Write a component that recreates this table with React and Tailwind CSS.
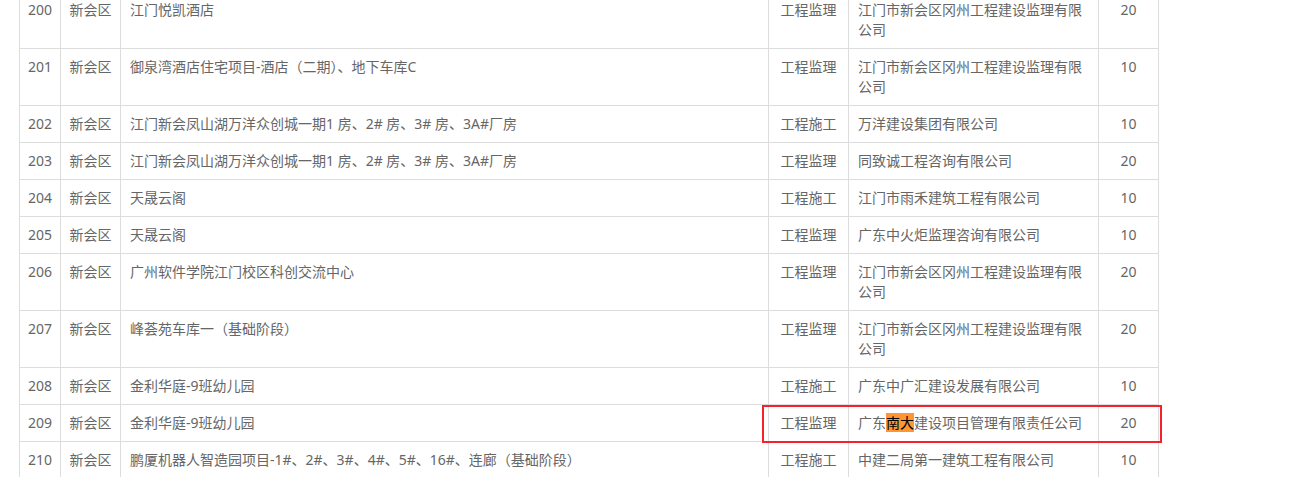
const rows = [
  ['200', '新会区', '江门悦凯酒店', '工程监理', '江门市新会区冈州工程建设监理有限公司', '20'],
  ['201', '新会区', '御泉湾酒店住宅项目-酒店（二期）、地下车库C', '工程监理', '江门市新会区冈州工程建设监理有限公司', '10'],
  ['202', '新会区', '江门新会凤山湖万洋众创城一期1 房、2# 房、3# 房、3A#厂房', '工程施工', '万洋建设集团有限公司', '10'],
  ['203', '新会区', '江门新会凤山湖万洋众创城一期1 房、2# 房、3# 房、3A#厂房', '工程监理', '同致诚工程咨询有限公司', '20'],
  ['204', '新会区', '天晟云阁', '工程施工', '江门市雨禾建筑工程有限公司', '10'],
  ['205', '新会区', '天晟云阁', '工程监理', '广东中火炬监理咨询有限公司', '10'],
  ['206', '新会区', '广州软件学院江门校区科创交流中心', '工程监理', '江门市新会区冈州工程建设监理有限公司', '20'],
  ['207', '新会区', '峰荟苑车库一（基础阶段）', '工程监理', '江门市新会区冈州工程建设监理有限公司', '20'],
  ['208', '新会区', '金利华庭-9班幼儿园', '工程施工', '广东中广汇建设发展有限公司', '10'],
  ['209', '新会区', '金利华庭-9班幼儿园', '工程监理', 'HIGHLIGHT', '20'],
  ['210', '新会区', '鹏厦机器人智造园项目-1#、2#、3#、4#、5#、16#、连廊（基础阶段）', '工程施工', '中建二局第一建筑工程有限公司', '10'],
]

const td = 'border border-[#dddddd] py-2 align-top'

export default function App() {
  return (
    <div className="h-[477px] overflow-hidden bg-white text-[14px] leading-[20px] text-[#666666]" style={{ fontFamily: '"Noto Sans", "Noto Sans CJK SC", sans-serif' }}>
      <div className="relative ml-[19px] mt-[-9px] w-[1140px]">
        <table className="w-[1140px] table-fixed border-collapse">
          <colgroup>
            <col className="w-[41px]" />
            <col className="w-[60px]" />
            <col className="w-[648px]" />
            <col className="w-[80px]" />
            <col className="w-[250px]" />
            <col className="w-[60px]" />
          </colgroup>
          <tbody>
            {rows.map(r => (
              <tr key={r[0]}>
                <td className={`${td} text-center`}>{r[0]}</td>
                <td className={`${td} text-center`}>{r[1]}</td>
                <td className={`${td} px-[9px]`}>{r[2]}</td>
                <td className={`${td} text-center`}>{r[3]}</td>
                <td className={`${td} px-[9px]`}>
                  {r[4] === 'HIGHLIGHT' ? (
                    <>广东<span className="bg-[#ff9632] text-black">南大</span>建设项目管理有限责任公司</>
                  ) : r[4]}
                </td>
                <td className={`${td} text-center`}>{r[5]}</td>
              </tr>
            ))}
          </tbody>
        </table>

        {/* search-result marker */}
        <div className="absolute left-[743px] top-[414px] h-[38px] w-[400px] border-2 border-[#f5222d]" />
      </div>
    </div>
  )
}
